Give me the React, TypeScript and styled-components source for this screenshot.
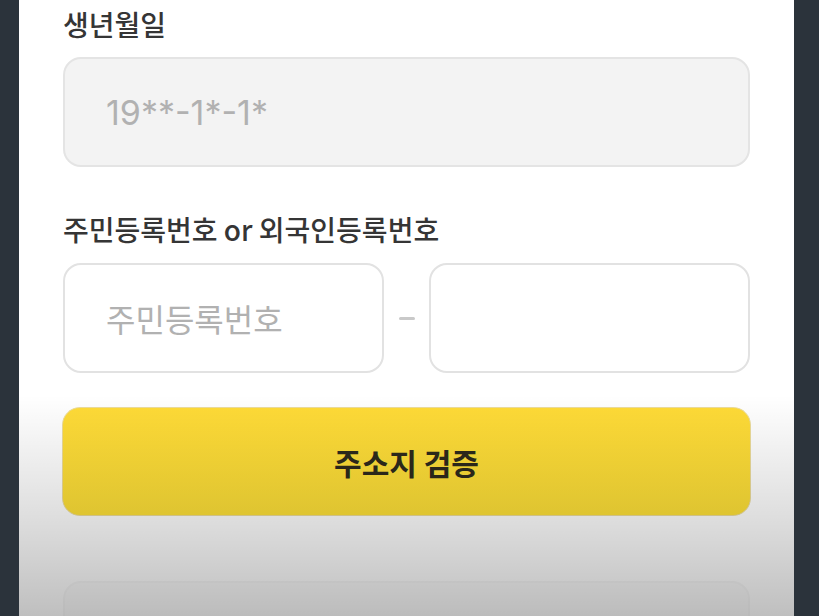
import React from 'react';
import styled, { createGlobalStyle } from 'styled-components';

const GlobalStyle = createGlobalStyle`
  html, body {
    margin: 0;
    padding: 0;
    height: 100%;
    background: #2b333b;
    overflow: hidden;
  }
  #root {
    height: 100%;
  }
`;

const Frame = styled.div`
  height: 616px;
  display: flex;
  justify-content: flex-start;
  padding-left: 19px;
  background: #2b333b;
`;

const Screen = styled.div`
  position: relative;
  width: 775px;
  height: 100%;
  box-sizing: border-box;
  padding: 6px 44px 0;
  background: #ffffff;
  display: flex;
  flex-direction: column;
  font-family: "Noto Sans CJK KR", "Noto Sans", sans-serif;
  overflow: hidden;

  & > * {
    flex-shrink: 0;
  }
`;

const Label = styled.div<{ $top?: number }>`
  margin-top: ${(p) => p.$top ?? 0}px;
  height: 36px;
  line-height: 36px;
  font-size: 28px;
  font-weight: 500;
  color: #353535;
`;

const Field = styled.div<{ $filled?: boolean }>`
  box-sizing: border-box;
  flex: 1;
  height: 110px;
  border-radius: 18px;
  border: 2px solid ${(p) => (p.$filled ? '#e4e4e4' : '#e2e2e2')};
  background: ${(p) => (p.$filled ? '#f3f3f3' : '#ffffff')};
  display: flex;
  align-items: center;
  padding-left: 41px;
`;

const FieldText = styled.span<{ $latin?: boolean }>`
  font-family: ${(p) =>
    p.$latin ? '"Inter", "Noto Sans CJK KR", sans-serif' : '"Noto Sans CJK KR", sans-serif'};
  font-size: ${(p) => (p.$latin ? 34 : 32)}px;
  color: #b1b1b1;
`;

const Row = styled.div<{ $top: number }>`
  margin-top: ${(p) => p.$top}px;
  display: flex;
  align-items: center;
`;

const Dash = styled.div`
  width: 45px;
  display: flex;
  justify-content: center;
  &::before {
    content: '';
    width: 16px;
    height: 3px;
    border-radius: 2px;
    background: #c9c9c9;
  }
`;

const VerifyButton = styled.button`
  margin-top: 34px;
  margin-left: -1px;
  width: calc(100% + 2px);
  height: 109px;
  border: 1px solid #ecdc9a;
  border-radius: 18px;
  background: linear-gradient(#ffdb37, #ffe138);
  font-family: "Noto Sans CJK KR", sans-serif;
  font-size: 30px;
  font-weight: 700;
  color: #2e2a1c;
  cursor: pointer;
`;

const BottomField = styled.div`
  margin-top: 65px;
  height: 110px;
  box-sizing: border-box;
  border-radius: 18px;
  border: 2px solid #f7f7f7;
  background: #fbfbfb;
`;

const Fade = styled.div`
  position: absolute;
  left: 0;
  right: 0;
  top: 395px;
  bottom: 0;
  pointer-events: none;
  background: linear-gradient(rgba(0, 0, 0, 0), rgba(0, 0, 0, 0.13) 55%, rgba(0, 0, 0, 0.25));
`;

export default function App() {
  return (
    <>
      <GlobalStyle />
      <Frame>
        <Screen>
          <Label>생년월일</Label>
          <Row $top={15}>
            <Field $filled>
              <FieldText $latin>19**-1*-1*</FieldText>
            </Field>
          </Row>
          <Label $top={44}>주민등록번호 or 외국인등록번호</Label>
          <Row $top={16}>
            <Field>
              <FieldText>주민등록번호</FieldText>
            </Field>
            <Dash />
            <Field />
          </Row>
          <VerifyButton>주소지 검증</VerifyButton>
          <BottomField />
          <Fade />
        </Screen>
      </Frame>
    </>
  );
}
